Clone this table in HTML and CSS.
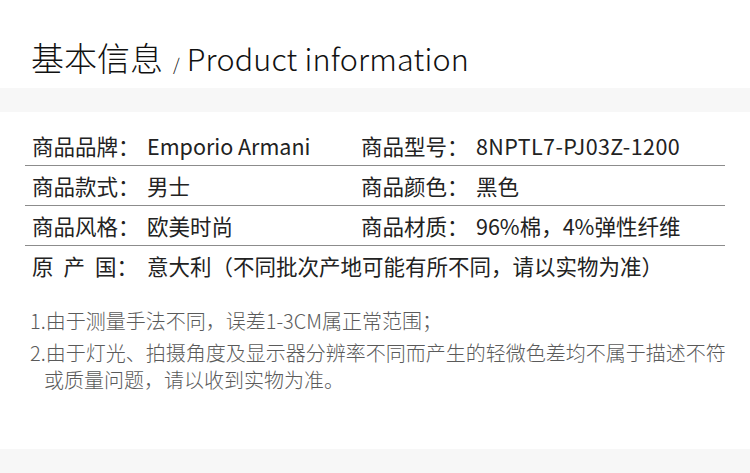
FILE: index.html
```html
<!DOCTYPE html>
<html lang="zh-CN">
<head>
<meta charset="utf-8">
<title>基本信息</title>
<link rel="stylesheet" href="styles.css">
</head>
<body>
<div class="page">
  <header class="head">
    <h1 class="title"><span class="title-cn">基本信息</span><span class="slash">/</span><span class="title-en">Product information</span></h1>
  </header>
  <div class="band"></div>
  <div class="table">
    <div class="row">
      <div class="cell"><span class="label">商品品牌：</span><span class="value">Emporio Armani</span></div>
      <div class="cell"><span class="label">商品型号：</span><span class="value value-code">8NPTL7-PJ03Z-1200</span></div>
    </div>
    <div class="row">
      <div class="cell"><span class="label">商品款式：</span><span class="value">男士</span></div>
      <div class="cell"><span class="label">商品颜色：</span><span class="value">黑色</span></div>
    </div>
    <div class="row">
      <div class="cell"><span class="label">商品风格：</span><span class="value">欧美时尚</span></div>
      <div class="cell"><span class="label">商品材质：</span><span class="value">96%棉，4%弹性纤维</span></div>
    </div>
    <div class="row row-last">
      <div class="cell cell-wide"><span class="label label-spaced">原<i></i>产<i></i>国：</span><span class="value">意大利（不同批次产地可能有所不同，请以实物为准）</span></div>
    </div>
  </div>
  <div class="notes">
    <p class="note">1.由于测量手法不同，误差1-3CM属正常范围；</p>
    <p class="note">2.由于灯光、拍摄角度及显示器分辨率不同而产生的轻微色差均不属于描述不符或质量问题，请以收到实物为准。</p>
  </div>
  <div class="band band-bottom"></div>
</div>
</body>
</html>
```

FILE: styles.css
```css
html, body {
  margin: 0;
  padding: 0;
  background: #ffffff;
}

.page {
  width: 750px;
  height: 473px;
  display: flex;
  flex-direction: column;
  font-family: "Noto Sans CJK SC", "Noto Sans", sans-serif;
  overflow: hidden;
}

.head {
  height: 88px;
  display: flex;
  align-items: flex-end;
  padding-left: 31px;
  box-sizing: border-box;
}

.title {
  margin: 0 0 10px 0;
  font-weight: 300;
  color: #111111;
  display: flex;
  align-items: baseline;
  line-height: 1.2;
}

.title-cn {
  font-size: 33px;
}

.slash {
  font-size: 17px;
  margin: 0 7px 0 10px;
}

.title-en {
  font-size: 30.5px;
  letter-spacing: 0.2px;
}

.band {
  height: 24px;
  background: #f7f7f7;
  flex: none;
}

.table {
  margin: 14px 25px 0 25px;
}

.row {
  display: grid;
  grid-template-columns: 329px 1fr;
  height: 39px;
  align-items: center;
  padding-left: 7px;
  border-bottom: 1px solid #8c8c8c;
}

.row-last {
  border-bottom: none;
}

.cell {
  display: flex;
  align-items: center;
  font-size: 21.5px;
  color: #222222;
  white-space: nowrap;
}

.cell-wide {
  grid-column: 1 / span 2;
}

.label {
  width: 115px;
  flex: none;
}

.label-spaced {
  display: inline-flex;
}

.label-spaced i {
  width: 10px;
}

.value {
  color: #222222;
}

.value-code {
  letter-spacing: 0.4px;
}

.notes {
  padding: 22px 20px 0 30px;
  flex: 1;
}

.note {
  margin: 0 0 5px 0;
  padding-left: 14px;
  text-indent: -14px;
  font-size: 20px;
  line-height: 27px;
  color: #5a5a5a;
  font-weight: 300;
}

.band-bottom {
  height: 24px;
}
```
